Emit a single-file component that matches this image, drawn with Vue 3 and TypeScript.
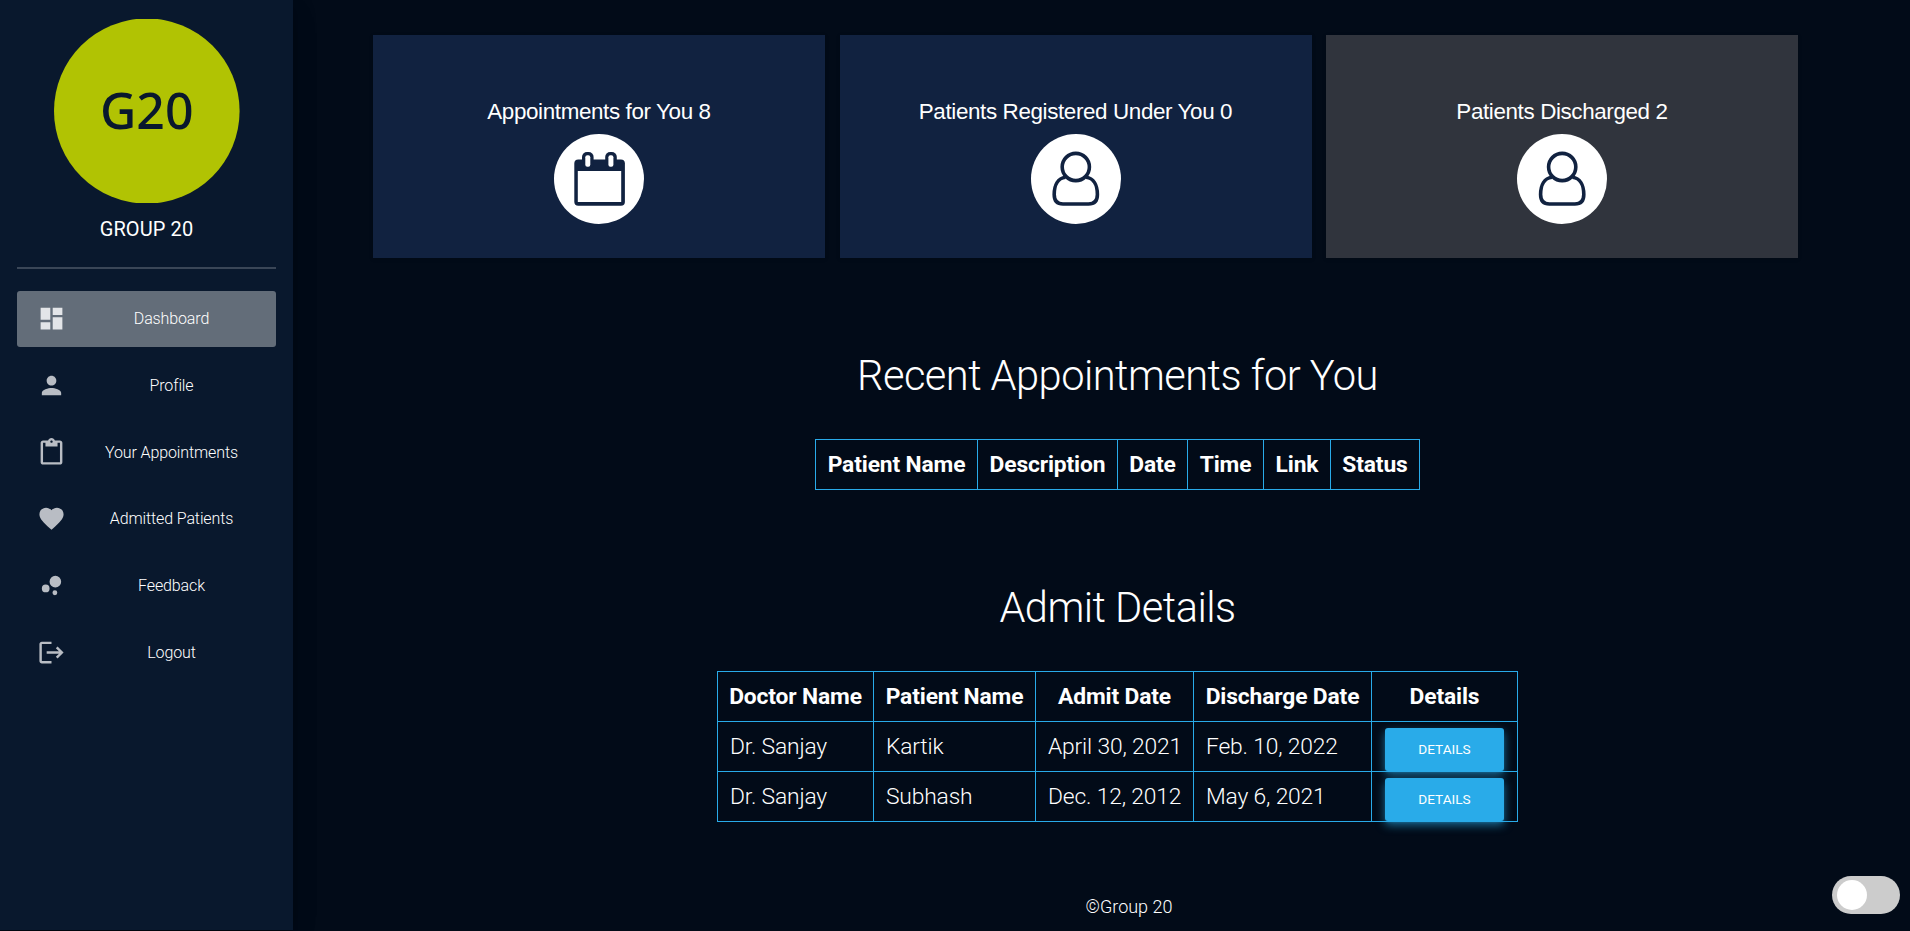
<script setup lang="ts">
interface NavItem {
  label: string
  icon: string
  active?: boolean
}

interface Admission {
  doctor: string
  patient: string
  admitted: string
  discharged: string
}

const navItems: NavItem[] = [
  { label: 'Dashboard', icon: 'M3 13h8V3H3v10zm0 8h8v-6H3v6zm10 0h8V11h-8v10zm0-18v6h8V3h-8z', active: true },
  { label: 'Profile', icon: 'M12 12c2.21 0 4-1.79 4-4s-1.79-4-4-4-4 1.79-4 4 1.79 4 4 4zm0 2c-2.67 0-8 1.34-8 4v2h16v-2c0-2.66-5.33-4-8-4z' },
  { label: 'Your Appointments', icon: 'M19 2h-4.18C14.4.84 13.3 0 12 0c-1.3 0-2.4.84-2.82 2H5c-1.1 0-2 .9-2 2v16c0 1.1.9 2 2 2h14c1.1 0 2-.9 2-2V4c0-1.1-.9-2-2-2zm-7 0c.55 0 1 .45 1 1s-.45 1-1 1-1-.45-1-1 .45-1 1-1zm7 18H5V4h2v3h10V4h2v16z' },
  { label: 'Admitted Patients', icon: 'M12 21.35l-1.45-1.32C5.4 15.36 2 12.28 2 8.5 2 5.42 4.42 3 7.5 3c1.74 0 3.41.81 4.5 2.09C13.09 3.81 14.76 3 16.5 3 19.58 3 22 5.42 22 8.5c0 3.78-3.4 6.86-8.55 11.54L12 21.35z' },
  { label: 'Feedback', icon: 'M4 14.4a3.2 3.2 0 1 0 6.4 0a3.2 3.2 0 1 0-6.4 0zM12.8 18a2 2 0 1 0 4 0a2 2 0 1 0-4 0zM10.4 8.8a4.8 4.8 0 1 0 9.6 0a4.8 4.8 0 1 0-9.6 0z' },
  { label: 'Logout', icon: 'M17 7l-1.41 1.41L18.17 11H8v2h10.17l-2.58 2.58L17 17l5-5zM4 5h8V3H4c-1.1 0-2 .9-2 2v14c0 1.1.9 2 2 2h8v-2H4V5z' },
]

const appointmentColumns: string[] = ['Patient Name', 'Description', 'Date', 'Time', 'Link', 'Status']
const admitColumns: string[] = ['Doctor Name', 'Patient Name', 'Admit Date', 'Discharge Date', 'Details']

const admissions: Admission[] = [
  { doctor: 'Dr. Sanjay', patient: 'Kartik', admitted: 'April 30, 2021', discharged: 'Feb. 10, 2022' },
  { doctor: 'Dr. Sanjay', patient: 'Subhash', admitted: 'Dec. 12, 2012', discharged: 'May 6, 2021' },
]
</script>

<template>
  <div class="page">
    <aside class="sidebar">
      <div class="brand">
        <svg class="logo" viewBox="0 0 186 184">
          <ellipse cx="92.8" cy="92" rx="92.8" ry="92.6" fill="#b1c303" />
          <text x="92.8" y="110" text-anchor="middle" class="logo-text">G20</text>
        </svg>
        <div class="brand-name">GROUP 20</div>
      </div>
      <nav class="nav">
        <a v-for="item in navItems" :key="item.label" class="nav-item" :class="{ active: item.active }">
          <svg class="nav-icon" viewBox="0 0 24 24"><path :d="item.icon" /></svg>
          <span class="nav-label">{{ item.label }}</span>
        </a>
      </nav>
    </aside>

    <main class="main">
      <section class="cards">
        <article class="card">
          <h2 class="card-title">Appointments for You 8</h2>
          <svg class="card-icon" viewBox="0 0 90 90">
            <circle cx="45" cy="45" r="45" fill="#fff" />
            <rect x="20.3" y="25.5" width="50.6" height="46.3" rx="4" fill="#112240" />
            <rect x="23.8" y="37" width="43.4" height="31" fill="#fff" />
            <rect x="28" y="18" width="11.6" height="17" rx="5" fill="#112240" />
            <rect x="51.2" y="18" width="11.6" height="17" rx="5" fill="#112240" />
            <rect x="31.3" y="21.3" width="5" height="11.5" rx="2" fill="#fff" />
            <rect x="54.4" y="21.3" width="5" height="11.5" rx="2" fill="#fff" />
          </svg>
        </article>
        <article class="card wide">
          <h2 class="card-title">Patients Registered Under You 0</h2>
          <svg class="card-icon" viewBox="0 0 90 90">
            <circle cx="45" cy="45" r="45" fill="#fff" />
            <g fill="none" stroke="#112240" stroke-width="3.6">
              <circle cx="44.8" cy="33" r="13.6" />
              <path d="M34.5 43.2C27 44 23.2 51 23.2 60.5Q23.2 70 32 70H57.5Q66.4 70 66.4 60.5C66.4 51 62.5 44 55.1 43.2" />
            </g>
          </svg>
        </article>
        <article class="card wide muted">
          <h2 class="card-title">Patients Discharged 2</h2>
          <svg class="card-icon" viewBox="0 0 90 90">
            <circle cx="45" cy="45" r="45" fill="#fff" />
            <g fill="none" stroke="#112240" stroke-width="3.6">
              <circle cx="45.2" cy="33" r="13.6" />
              <path d="M34.9 43.2C27.4 44 23.6 51 23.6 60.5Q23.6 70 32.4 70H57.9Q66.8 70 66.8 60.5C66.8 51 62.9 44 55.5 43.2" />
            </g>
          </svg>
        </article>
      </section>

      <section class="block">
        <h1 class="heading">Recent Appointments for You</h1>
        <table class="grid appointments">
          <colgroup><col v-for="c in appointmentColumns" :key="c" /></colgroup>
          <thead>
            <tr><th v-for="c in appointmentColumns" :key="c">{{ c }}</th></tr>
          </thead>
        </table>
      </section>

      <section class="block">
        <h1 class="heading">Admit Details</h1>
        <table class="grid admits">
          <colgroup><col v-for="c in admitColumns" :key="c" /></colgroup>
          <thead>
            <tr><th v-for="c in admitColumns" :key="c">{{ c }}</th></tr>
          </thead>
          <tbody>
            <tr v-for="a in admissions" :key="a.patient">
              <td>{{ a.doctor }}</td>
              <td>{{ a.patient }}</td>
              <td>{{ a.admitted }}</td>
              <td>{{ a.discharged }}</td>
              <td class="action"><button class="btn" type="button">DETAILS</button></td>
            </tr>
          </tbody>
        </table>
      </section>

      <footer class="footer">©Group 20</footer>
    </main>

    <div class="switch"><span class="knob"></span></div>
  </div>
</template>

<style>
body {
  margin: 0;
  background: #020b18;
  overflow: hidden;
}
</style>

<style scoped>
.page {
  display: flex;
  height: 931px;
  box-sizing: border-box;
  padding-bottom: 1px;
  background: #020b18;
  color: #fff;
  font-family: Roboto, "Liberation Sans", sans-serif;
  font-weight: 300;
}

.sidebar {
  width: 293px;
  flex: none;
  box-sizing: border-box;
  padding: 19px 17px 0;
  background: #09182d;
  box-shadow: 0 10px 30px -12px rgba(0, 0, 0, 0.42), 0 4px 25px 0 rgba(0, 0, 0, 0.12), 0 8px 10px -5px rgba(0, 0, 0, 0.2);
}

.brand {
  height: 248px;
  display: flex;
  flex-direction: column;
  align-items: center;
  border-bottom: 2px solid #3a4657;
}

.logo {
  width: 186px;
  height: 184px;
}

.logo-text {
  font: 500 50px "Noto Sans", "Open Sans", sans-serif;
  fill: #09182d;
}

.brand-name {
  margin-top: 11px;
  font-size: 20px;
  letter-spacing: 0.1px;
  line-height: 30px;
  font-weight: 400;
}

.nav {
  margin-top: 22px;
  display: flex;
  flex-direction: column;
  gap: 10.75px;
}

.nav-item {
  height: 56px;
  display: flex;
  align-items: center;
  box-sizing: border-box;
  padding: 0 15px 0 19.5px;
  border-radius: 3px;
}

.nav-item.active {
  background: #636d79;
}

.nav-icon {
  width: 29px;
  height: 29px;
  margin-top: -1px;
  flex: none;
  fill: #b9bdc4;
}

.active .nav-icon {
  fill: #e3e5e8;
}

.nav-label {
  flex: 1;
  margin-left: 16.5px;
  text-align: center;
  font-size: 16px;
  letter-spacing: -0.12px;
  line-height: 30px;
}

.main {
  flex: 1;
  display: flex;
  flex-direction: column;
}

.cards {
  display: flex;
  gap: 14.5px;
  margin: 35px 0 0 80px;
}

.card {
  width: 452px;
  height: 223px;
  box-sizing: border-box;
  padding-top: 60px;
  display: flex;
  flex-direction: column;
  align-items: center;
  background: #112240;
  box-shadow: 0 1px 4px rgba(0, 0, 0, 0.14);
}

.card.wide {
  width: 472px;
}

.card.muted {
  background: #30343d;
}

.card-title {
  margin: 0 0 5px;
  font: 400 22.4px/34px "Liberation Sans", sans-serif;
  letter-spacing: -0.37px;
}

.card-icon {
  width: 90px;
  height: 90px;
}

.block {
  width: 1649px;
  display: flex;
  flex-direction: column;
  align-items: center;
  margin-top: 88px;
}

.heading {
  margin: 0 0 34px;
  font-size: 41.6px;
  letter-spacing: -0.53px;
  line-height: 59px;
  font-weight: 300;
}

.grid {
  border-collapse: collapse;
  table-layout: fixed;
  font-size: 22.8px;
  letter-spacing: -0.16px;
}

.grid th,
.grid td {
  height: 50px;
  box-sizing: border-box;
  padding: 0 12px;
  border: 1px solid #29abe9;
  line-height: 30px;
  white-space: nowrap;
}

.grid th {
  padding: 0;
  font-weight: 700;
  letter-spacing: -0.14px;
  text-align: center;
}

.appointments { width: 605px; }
.appointments col:nth-child(1) { width: 162px; }
.appointments col:nth-child(2) { width: 140px; }
.appointments col:nth-child(3) { width: 70px; }
.appointments col:nth-child(4) { width: 76px; }
.appointments col:nth-child(5) { width: 67px; }
.appointments col:nth-child(6) { width: 89px; }

.admits { width: 801px; }
.admits col:nth-child(1) { width: 156px; }
.admits col:nth-child(2) { width: 162px; }
.admits col:nth-child(3) { width: 158px; }
.admits col:nth-child(4) { width: 178px; }
.admits col:nth-child(5) { width: 146px; }

.grid td.action {
  padding: 6px 0 0 13px;
}

.btn {
  display: block;
  width: 119px;
  height: 43px;
  padding: 0;
  border: 0;
  border-radius: 3px;
  background: #29abe9;
  color: #fff;
  font: 400 13.6px/43px Roboto, sans-serif;
  box-shadow: 0 2px 2px 0 rgba(41, 171, 233, 0.14), 0 3px 1px -2px rgba(41, 171, 233, 0.2), 0 4px 10px 0 rgba(41, 171, 233, 0.6);
}

.footer {
  width: 1672px;
  margin-top: 70px;
  text-align: center;
  font-size: 18px;
  line-height: 30px;
}

.switch {
  position: absolute;
  left: 1832px;
  top: 876px;
  width: 68px;
  height: 38px;
  border-radius: 19px;
  background: #ccc;
}

.knob {
  display: block;
  width: 30px;
  height: 30px;
  margin: 4px 0 0 5px;
  border-radius: 50%;
  background: #fff;
}
</style>
